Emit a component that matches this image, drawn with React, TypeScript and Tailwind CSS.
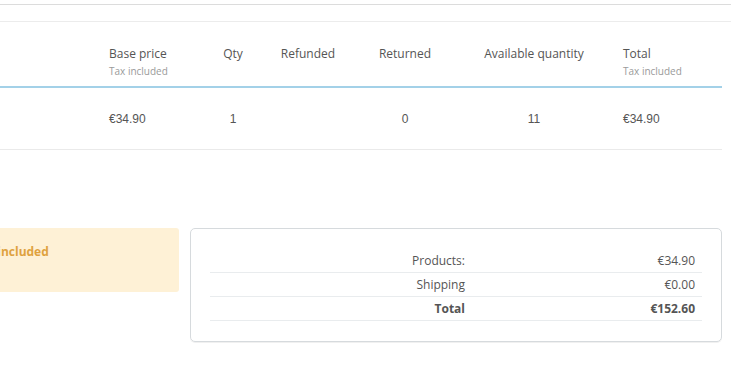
const cols = [
  { key: "product", label: "", sub: "", w: "w-[101px]", align: "text-left" },
  { key: "base", label: "Base price", sub: "Tax included", w: "w-[106px]", align: "text-left" },
  { key: "qty", label: "Qty", sub: "", w: "w-[52px]", align: "text-center" },
  { key: "refunded", label: "Refunded", sub: "", w: "w-[98px]", align: "text-center" },
  { key: "returned", label: "Returned", sub: "", w: "w-[96px]", align: "text-center" },
  { key: "available", label: "Available quantity", sub: "", w: "w-[162px]", align: "text-center" },
  { key: "total", label: "Total", sub: "Tax included", w: "w-[107px]", align: "text-left" },
];

const row: Record<string, string> = {
  product: "",
  base: "€34.90",
  qty: "1",
  refunded: "",
  returned: "0",
  available: "11",
  total: "€34.90",
};

const summary = [
  { label: "Products:", value: "€34.90", bold: false },
  { label: "Shipping", value: "€0.00", bold: false },
  { label: "Total", value: "€152.60", bold: true },
];

export default function App() {
  return (
    <div
      className="w-[731px] h-[382px] overflow-hidden bg-white text-[#555]"
      style={{ fontFamily: '"Open Sans", "Liberation Sans", sans-serif' }}>
      {/* top borders */}
      <div className="h-[4px]" />
      <div className="h-[17px] border-t border-[#dcdcdc]" />
      <div className="border-t border-[#ececec]" />

      <div className="pr-[9px]">
        <table className="table-fixed border-collapse w-[722px]">
          <thead>
            <tr className="border-b-2 border-[#a3d1e8]">
              {cols.map((c) => (
                <th
                  key={c.key}
                  className={`${c.w} ${c.align} font-normal px-2 pt-[23px] pb-[8px] align-top`}>
                  <div className="text-[12px] leading-[17px] text-[#555] whitespace-nowrap">
                    {c.label}
                  </div>
                  {c.sub && (
                    <div className="text-[10px] leading-[14px] mt-[2px] text-[#9a9a9a] whitespace-nowrap">
                      {c.sub}
                    </div>
                  )}
                </th>
              ))}
            </tr>
          </thead>
          <tbody>
            <tr className="border-b border-[#eaeaea]">
              {cols.map((c) => (
                <td
                  key={c.key}
                  className={`${c.align} px-2 pt-[23px] pb-[22px] text-[12px] leading-[16px] text-[#555]`}
                  style={{ fontFamily: '"Liberation Sans", Arial, sans-serif' }}>
                  {row[c.key]}
                </td>
              ))}
            </tr>
          </tbody>
        </table>

        <div className="flex gap-[11px] mt-[78px] items-start">
          {/* warning box, scrolled partly out of view on the left */}
          <div className="w-[179px] h-[64px] bg-[#fef1d6] rounded-r-[3px] overflow-hidden pt-[15px]">
            <div className="-ml-[27px] whitespace-nowrap text-[12px] leading-[18px] font-bold text-[#dfa23f]">
              Tax included
            </div>
          </div>

          <div className="flex-1 h-[114px] border border-[#d6dadd] rounded-[5px] shadow-[0_1px_0_rgba(0,0,0,0.06)] px-[19px] pt-[20px]">
            {summary.map((s) => (
              <div
                key={s.label}
                className={`flex h-[24px] items-center border-b border-[#e9ecee] text-[12px] ${
                  s.bold ? "font-bold" : ""
                }`}>
                <div className="w-[262px] pr-[7px] text-right">{s.label}</div>
                <div className="flex-1 pr-[7px] text-right">{s.value}</div>
              </div>
            ))}
          </div>
        </div>
      </div>
    </div>
  );
}
